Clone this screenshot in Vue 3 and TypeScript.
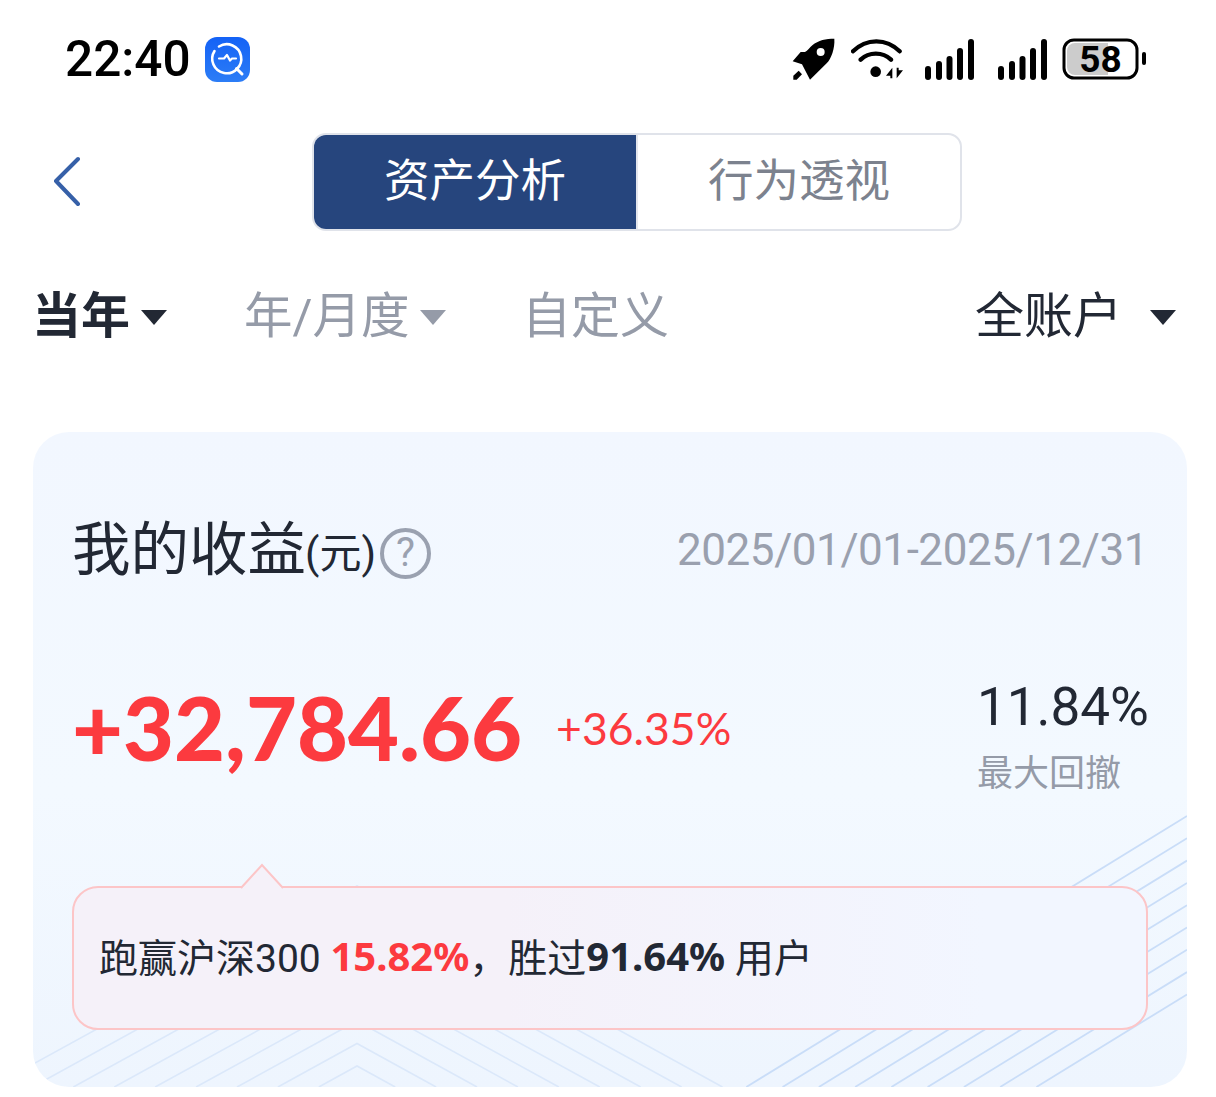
<script setup lang="ts">
const risingLines = Array.from({ length: 9 }, (_, i) => {
  const y = 816 + 22.3 * i - 432
  return { x1: 1154, y1: y, x2: 1154 - (655 - y) / 0.615, y2: 655 }
})

const chevrons = Array.from({ length: 9 }, (_, i) => {
  const y = 454 + 22.5 * i
  const left = 324 - (655 - y) / 0.55
  const right = 324 + (655 - y) / 0.55
  return `${left},655 324,${y} ${right},655`
})

const signalBars = [
  { x: 0, y: 27, h: 14 },
  { x: 11, y: 22, h: 19 },
  { x: 21.5, y: 17, h: 24 },
  { x: 32, y: 9, h: 32 },
  { x: 43, y: 0, h: 41 },
]
</script>

<template>
  <div class="page">
    <div class="status-bar">
      <div class="status-left">
        <span class="time">22:40</span>
        <div class="app-icon">
          <svg width="45" height="45" viewBox="0 0 45 45" fill="none" stroke="#fff" stroke-linecap="round" stroke-linejoin="round">
            <path d="M14 9.5a14.5 14.5 0 1 1-4.5 4.5" stroke-width="2.6" />
            <path d="M31.5 31.5 37 37" stroke-width="3" />
            <path d="M14 21.5h5l3-3.5 3 5.5 2-2h4" stroke-width="2.2" />
          </svg>
        </div>
      </div>
      <div class="status-right">
        <svg class="rocket" width="44" height="42" viewBox="66 55 132 126">
          <path d="M193 57c-25 0-48 4-66 20-8 7-14 16-22 20H92L68 125l28 9 24 46 50-49c14-14 25-45 23-74Z" />
          <path d="M86 153 70 168v12h10l16-16Z" />
          <circle cx="152" cy="97" r="12" fill="#fff" />
        </svg>
        <svg class="wifi" width="52" height="40" viewBox="243 60 156 120">
          <path d="M249 97c40-40 100-40 140 0M272 122c25-24 66-24 91 0" fill="none" stroke="#000" stroke-width="13" stroke-linecap="round" />
          <circle cx="317" cy="158" r="16" />
          <path d="M367 146v32h-6v-8h-13ZM380 146h6v8h13l-19 24Z" />
        </svg>
        <svg v-for="n in 2" :key="n" class="signal" width="50" height="41" viewBox="0 0 50 41">
          <rect v-for="bar in signalBars" :key="bar.x" :x="bar.x" :y="bar.y" width="6" :height="bar.h" rx="3" />
        </svg>
        <svg class="battery" width="86" height="42" viewBox="0 0 86 42">
          <rect x="2" y="2" width="73" height="38" rx="10" fill="#fff" stroke="#000" stroke-width="3" />
          <path d="M5 13a8 8 0 0 1 8-8h33v32H13a8 8 0 0 1-8-8Z" fill="#ccc" />
          <text x="38.5" y="34" text-anchor="middle" class="battery-text">58</text>
          <rect x="80" y="14" width="4" height="13" rx="2" />
        </svg>
      </div>
    </div>

    <div class="nav">
      <svg class="back" width="28" height="50" viewBox="0 0 28 50" fill="none" stroke="#3660a8" stroke-width="4" stroke-linecap="round" stroke-linejoin="round">
        <path d="M25 3 3 25l22 23" />
      </svg>
      <div class="tabs">
        <div class="tab active">资产分析</div>
        <div class="tab">行为透视</div>
      </div>
    </div>

    <div class="filters">
      <div class="filter-left">
        <div class="filter strong">当年<i class="caret"></i></div>
        <div class="filter muted">年/月度<i class="caret"></i></div>
        <div class="filter muted">自定义</div>
      </div>
      <div class="filter account">全账户<i class="caret"></i></div>
    </div>

    <div class="card">
      <svg class="pattern" width="1154" height="655" viewBox="0 0 1154 655" fill="none">
        <polyline v-for="(pts, i) in chevrons" :key="i" :points="pts" stroke="#dbe8fa" stroke-width="1.6" />
        <line v-for="(l, i) in risingLines" :key="i" :x1="l.x1" :y1="l.y1" :x2="l.x2" :y2="l.y2" stroke="#c9ddf8" stroke-width="1.8" />
      </svg>

      <div class="card-head">
        <div class="title">
          <span>我的收益</span><span class="unit">(元)</span>
          <span class="help">?</span>
        </div>
        <div class="date">2025/01/01-2025/12/31</div>
      </div>

      <div class="summary">
        <div class="gain">
          <span class="amount">+32,784.66</span>
          <span class="rate">+36.35%</span>
        </div>
        <div class="drawdown">
          <div class="dd-value">11.84%</div>
          <div class="dd-label">最大回撤</div>
        </div>
      </div>

      <div class="callout">
        <svg class="notch" width="44" height="27" viewBox="0 0 44 27">
          <path d="M1 25 22 2l21 23" fill="#f5f1f9" stroke="#fcc5c7" stroke-width="2" />
          <rect x="3" y="24" width="38" height="3" fill="#f5f1f9" />
        </svg>
        <span class="digits">跑赢沪深300 </span><b class="red">15.82%</b><span>，胜过</span><b>91.64%</b><span> 用户</span>
      </div>
    </div>
  </div>
</template>

<style>
html,
body {
  margin: 0;
  background: #fff;
}
</style>

<style scoped>
.page {
  width: 1216px;
  height: 1097px;
  overflow: hidden;
  background: #fff;
  font-family: Roboto, "Noto Sans CJK SC", sans-serif;
  color: #222834;
}

.status-bar {
  height: 118px;
  display: flex;
  justify-content: space-between;
  align-items: center;
  padding: 0 68px 0 65px;
}

.status-left,
.status-right {
  display: flex;
  align-items: center;
}

.time {
  font-size: 49.5px;
  font-weight: 500;
  line-height: 60px;
  color: #000;
}

.app-icon {
  width: 45px;
  height: 45px;
  margin-left: 14px;
  border-radius: 12px;
  background: linear-gradient(180deg, #1462f6, #2c7df6);
}

.app-icon svg {
  display: block;
}

.status-right svg {
  display: block;
}

.rocket {
  margin-right: 15px;
}

.wifi {
  margin-right: 22px;
}

.signal {
  margin-right: 23px;
}

.signal:nth-of-type(4) {
  margin-right: 14px;
}

.battery-text {
  font: 700 37px Roboto, sans-serif;
}

.nav {
  height: 98px;
  margin-top: 15px;
  display: flex;
  align-items: center;
  padding-left: 53px;
}

.back {
  display: block;
  margin-bottom: 2px;
}

.tabs {
  width: 650px;
  height: 98px;
  box-sizing: border-box;
  margin-left: 231px;
  display: flex;
  border: 2px solid #e0e3ea;
  border-radius: 14px;
  overflow: hidden;
}

.tab {
  flex: 1;
  display: flex;
  align-items: center;
  justify-content: center;
  padding-bottom: 10px;
  font-size: 45.5px;
  color: #7c828e;
}

.tab.active {
  flex: none;
  width: 322px;
  background: #26457d;
  color: #fff;
  border-right: 2px solid #e4e6ec;
}

.filters {
  height: 60px;
  margin-top: 56px;
  margin-bottom: -1px;
  padding: 0 40px 0 32px;
  display: flex;
  justify-content: space-between;
  align-items: center;
}

.filter-left {
  display: flex;
  align-items: center;
}

.filter {
  display: flex;
  align-items: center;
  font-size: 49px;
  line-height: 60px;
}

.filter.strong {
  font-weight: 700;
  width: 212px;
}

.filter.muted {
  color: #959ba8;
}

.filter.muted:nth-child(2) {
  width: 278px;
  font-size: 48.5px;
}

.caret {
  width: 0;
  height: 0;
  margin-left: 11px;
  border-left: 13.5px solid transparent;
  border-right: 13.5px solid transparent;
  border-top: 15px solid #222834;
}

.muted .caret {
  margin-left: 10px;
  border-top-color: #959ba8;
}

.account .caret {
  margin-left: 28px;
}

.card {
  position: relative;
  height: 655px;
  box-sizing: border-box;
  margin: 86px 29px 0 33px;
  padding: 82px 39px 0 39px;
  border-radius: 36px;
  overflow: hidden;
  background: linear-gradient(180deg, #f2f7ff, #f3f9ff 55%, #eef5fe);
}

.pattern {
  position: absolute;
  left: 0;
  top: 0;
}

.card-head {
  position: relative;
  height: 68px;
  display: flex;
  justify-content: space-between;
  align-items: center;
}

.title {
  display: flex;
  align-items: center;
  font-size: 58.5px;
  line-height: 68px;
}

.title > span:first-child {
  padding-top: 4px;
}

.unit {
  font-size: 42px;
  margin-top: 12px;
  margin-left: -1px;
}

.help {
  width: 51px;
  height: 51px;
  box-sizing: border-box;
  margin-left: 4px;
  margin-top: 10px;
  border: 4px solid #9aa1b0;
  border-radius: 50%;
  display: flex;
  align-items: center;
  justify-content: center;
  font-size: 40px;
  line-height: 1;
  color: #9aa1b0;
}

.date {
  font-size: 44px;
  color: #9aa0ae;
  letter-spacing: -0.45px;
  padding-top: 4px;
}

.summary {
  position: relative;
  height: 125px;
  margin-top: 93px;
  display: flex;
  justify-content: space-between;
}

.gain {
  height: 104px;
  display: flex;
  align-items: center;
  gap: 34px;
  color: #fc3a3f;
  font-family: Lato, Roboto, sans-serif;
}

.amount {
  font-size: 88px;
  font-weight: 900;
}

.rate {
  font-size: 44.5px;
}

.drawdown {
  width: 171px;
}

.dd-value {
  font-size: 53px;
  line-height: 64px;
}

.dd-label {
  margin-top: 9px;
  font-size: 36px;
  line-height: 52px;
  color: #959ba8;
}

.callout {
  position: relative;
  height: 144px;
  box-sizing: border-box;
  margin-top: 86px;
  padding: 0 0 6px 25px;
  display: flex;
  align-items: center;
  white-space: pre;
  border: 2px solid #fcc5c7;
  border-radius: 26px;
  background: linear-gradient(90deg, #f5f1f9 40%, #f2f6ff 85%);
  font-size: 39px;
}

.callout b {
  font-family: "Noto Sans", Roboto, sans-serif;
  font-size: 40px;
  font-weight: 700;
}

.red {
  color: #fc3a3f;
}

.notch {
  position: absolute;
  left: 166px;
  top: -25px;
}
</style>
